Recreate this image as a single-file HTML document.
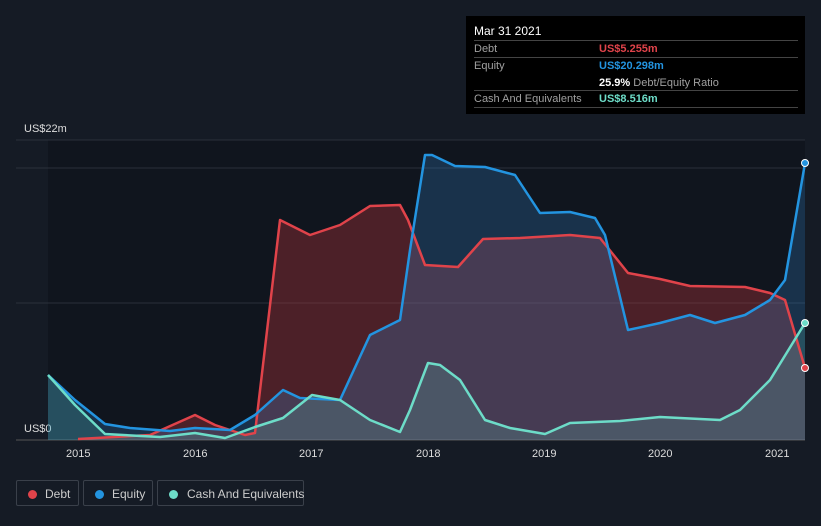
<!DOCTYPE html><html><head><style>
body{margin:0;width:821px;height:526px;background:#151b25;font-family:"Liberation Sans",sans-serif;overflow:hidden;position:relative}
.tt{position:absolute;left:466px;top:16px;width:339px;height:98px;background:#000;color:#fff;font-size:11px}
.row{position:absolute;left:8px;width:324px;border-top:1px solid #444}
.lab{position:absolute;left:0;color:#a0a0a0;white-space:nowrap}
.val{position:absolute;left:125px;font-weight:bold;white-space:nowrap}
.leg{position:absolute;top:480px;height:26px;border:1px solid #3a404a;border-radius:2px;color:#ccc;font-size:12px;line-height:26px;box-sizing:border-box;white-space:nowrap}
.leg i{position:absolute;top:9px;left:11px;width:9px;height:9px;border-radius:50%}
.leg span{position:absolute;left:28px}
</style></head><body>
<svg width="821" height="526" style="position:absolute;left:0;top:0">
<rect x="48" y="140" width="757" height="300" fill="#10151e"/>
<line x1="16" y1="140" x2="805" y2="140" stroke="#2a303a"/>
<line x1="16" y1="168" x2="805" y2="168" stroke="#2a303a"/>
<line x1="16" y1="303" x2="805" y2="303" stroke="#2a303a"/>
<line x1="16" y1="440" x2="805" y2="440" stroke="#555"/>
<g fill="#ddd" font-size="11"><text x="24" y="132">US$22m</text><text x="24" y="432">US$0</text>
<text x="66" y="457">2015</text><text x="183" y="457">2016</text><text x="299" y="457">2017</text><text x="416" y="457">2018</text><text x="532" y="457">2019</text><text x="648" y="457">2020</text><text x="765" y="457">2021</text></g>
<g stroke-linejoin="round" stroke-width="2.5">
<path d="M78,439 L150,435 195,415 215,425 245,435 255,433 280,220 310,235 340,225 370,206 400,205 408,220 425,265 458,267 483,239 520,238 570,235 600,238 628,273 660,279 690,286 745,287 770,293 785,300 805,368 L805,440 78,440Z" fill="rgba(190,55,60,0.35)" stroke="none"/>
<path d="M48,375 L75,400 105,424 130,428 170,431 195,428 230,430 255,415 283,390 300,398 340,400 370,335 400,320 410,250 425,155 432,155 455,166 485,167 515,175 540,213 570,212 595,218 605,235 628,330 660,323 690,315 715,323 745,315 770,300 785,280 805,163 L805,440 48,440Z" fill="rgba(50,140,210,0.25)" stroke="none"/>
<path d="M48,375 L75,405 105,434 160,437 195,433 225,438 255,427 283,418 312,395 340,400 370,420 400,432 410,410 428,363 440,365 460,380 485,420 510,428 545,434 570,423 620,421 660,417 720,420 740,410 770,380 805,323 L805,440 48,440Z" fill="rgba(100,210,190,0.18)" stroke="none"/>
<path d="M78,439 L150,435 195,415 215,425 245,435 255,433 280,220 310,235 340,225 370,206 400,205 408,220 425,265 458,267 483,239 520,238 570,235 600,238 628,273 660,279 690,286 745,287 770,293 785,300 805,368" fill="none" stroke="#e0434a"/>
<path d="M48,375 L75,400 105,424 130,428 170,431 195,428 230,430 255,415 283,390 300,398 340,400 370,335 400,320 410,250 425,155 432,155 455,166 485,167 515,175 540,213 570,212 595,218 605,235 628,330 660,323 690,315 715,323 745,315 770,300 785,280 805,163" fill="none" stroke="#2394e0"/>
<path d="M48,375 L75,405 105,434 160,437 195,433 225,438 255,427 283,418 312,395 340,400 370,420 400,432 410,410 428,363 440,365 460,380 485,420 510,428 545,434 570,423 620,421 660,417 720,420 740,410 770,380 805,323" fill="none" stroke="#6ddcc8"/>
</g>
<circle cx="805" cy="163" r="3.5" fill="#2394e0" stroke="#fff"/>
<circle cx="805" cy="323" r="3.5" fill="#6ddcc8" stroke="#fff"/>
<circle cx="805" cy="368" r="3.5" fill="#e0434a" stroke="#fff"/>
</svg>
<div class="tt">
<div style="position:absolute;left:8px;top:8px;font-size:12px">Mar 31 2021</div>
<div class="row" style="top:24px"><span class="lab" style="top:2px">Debt</span><span class="val" style="top:2px;color:#e0434a">US$5.255m</span></div>
<div class="row" style="top:41px"><span class="lab" style="top:2px">Equity</span><span class="val" style="top:2px;color:#2394e0">US$20.298m</span><span style="position:absolute;left:125px;top:19px;white-space:nowrap"><b>25.9%</b> <span style="color:#a0a0a0">Debt/Equity Ratio</span></span></div>
<div class="row" style="top:74px"><span class="lab" style="top:2px">Cash And Equivalents</span><span class="val" style="top:2px;color:#6ddcc8">US$8.516m</span></div>
<div class="row" style="top:91px"></div>
</div>
<div class="leg" style="left:16px;width:63px"><i style="background:#e0434a"></i><span>Debt</span></div>
<div class="leg" style="left:83px;width:70px"><i style="background:#2394e0"></i><span>Equity</span></div>
<div class="leg" style="left:157px;width:147px"><i style="background:#6ddcc8"></i><span style="left:29px">Cash And Equivalents</span></div>
</body></html>
